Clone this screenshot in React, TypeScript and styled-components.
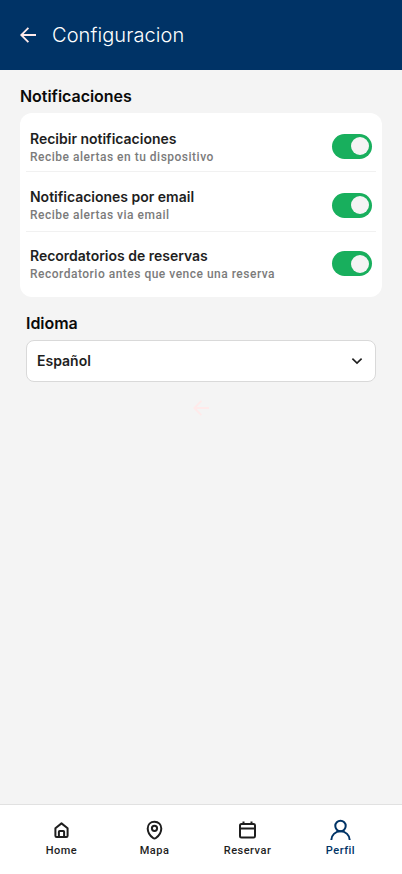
import React, { useState } from "react";
import styled, { createGlobalStyle } from "styled-components";

const GlobalStyle = createGlobalStyle`
  *, *::before, *::after { box-sizing: border-box; }
  body { margin: 0; background: #f4f4f4; font-family: Inter, sans-serif; }
  button { border: 0; padding: 0; background: none; font: inherit; cursor: pointer; }
`;

const Screen = styled.div`
  display: flex;
  flex-direction: column;
  width: 402px;
  height: 874px;
  background: #f4f4f4;
  overflow: hidden;
`;

const Header = styled.header`
  display: flex;
  align-items: center;
  gap: 16px;
  height: 70px;
  padding-left: 20px;
  background: #003366;
  flex: none;
`;

const BackButton = styled.button`
  display: flex;
`;

const Title = styled.h1`
  margin: 0;
  font-size: 20px;
  font-weight: 300;
  line-height: 24px;
  letter-spacing: 0.08px;
  color: #fff;
`;

const Content = styled.main`
  display: flex;
  flex-direction: column;
  flex: 1;
  padding: 16px 20px 0;
`;

const Heading = styled.h2<{ $inset?: boolean }>`
  margin: ${(p) => (p.$inset ? "16px 0 7px 6px" : "0 0 7px")};
  font-size: 16px;
  font-weight: 600;
  line-height: 20px;
  letter-spacing: -0.03px;
  color: #0a0a0a;
`;

const Card = styled.section`
  height: 184px;
  padding: 0 6px;
  border-radius: 12px;
  background: #fff;
`;

const Row = styled.div<{ $height: number; $top: number; $line?: boolean }>`
  display: flex;
  justify-content: space-between;
  align-items: flex-start;
  height: ${(p) => p.$height}px;
  padding: ${(p) => p.$top}px 4px 0;
  border-bottom: ${(p) => (p.$line ? "1px solid #f1f1f1" : "0")};
`;

const RowText = styled.div`
  display: flex;
  flex-direction: column;
`;

const RowTitle = styled.span`
  font-size: 14px;
  font-weight: 600;
  line-height: 18px;
  letter-spacing: -0.01px;
  color: #1e1e1e;
`;

const RowNote = styled.span`
  font-family: Roboto, sans-serif;
  font-size: 12px;
  font-weight: 500;
  line-height: 16px;
  letter-spacing: 0.5px;
  color: #7b7b7b;
  margin-top: 1px;
`;

const Toggle = styled.button<{ $on: boolean; $offset: number }>`
  display: flex;
  align-items: center;
  justify-content: ${(p) => (p.$on ? "flex-end" : "flex-start")};
  width: 40px;
  height: 24.5px;
  margin-top: ${(p) => p.$offset}px;
  padding: 0 3px;
  border-radius: 13px;
  background: ${(p) => (p.$on ? "#18af5d" : "#c4c4c4")};
`;

const Knob = styled.span`
  width: 18px;
  height: 18px;
  border-radius: 50%;
  background: #f4f4f4;
`;

const Select = styled.button`
  display: flex;
  align-items: center;
  justify-content: space-between;
  height: 42px;
  margin: 0 6px;
  padding: 0 12px 0 10px;
  border: 1px solid #d9d9d9;
  border-radius: 8px;
  background: #fff;
  font-size: 14px;
  font-weight: 600;
  color: #1e1e1e;
`;

const SelectValue = styled.span`
  line-height: 18px;
  padding-bottom: 1px;
`;

const FaintArrow = styled.div`
  display: flex;
  justify-content: center;
  margin-top: 18px;
`;

const Nav = styled.nav`
  display: flex;
  height: 70px;
  padding: 0 15px;
  border-top: 1px solid #e1e1e1;
  background: #fff;
  flex: none;
`;

const NavItem = styled.button<{ $active?: boolean }>`
  display: flex;
  flex-direction: column;
  align-items: center;
  gap: 1px;
  flex: 1;
  padding-top: 13px;
  color: ${(p) => (p.$active ? "#003366" : "#1e1e1e")};
`;

const NavLabel = styled.span`
  font-family: Roboto, sans-serif;
  font-size: 11px;
  font-weight: 500;
  line-height: 16px;
  letter-spacing: 0.5px;
`;

const BackArrow = ({ color }: { color: string }) => (
  <svg width="16" height="16" viewBox="0 0 16 16" fill="none" stroke={color} strokeWidth="1.8">
    <path d="M16 8H1.4M8.4 .8 1.2 8l7.2 7.2" />
  </svg>
);

const iconProps = {
  width: 25,
  height: 24,
  viewBox: "-0.5 0 25 24",
  fill: "none",
  stroke: "currentColor",
  strokeWidth: 2,
} as const;

const HomeIcon = () => (
  <svg {...iconProps}>
    <path d="M5.9 10.2 12 5.4l6.1 4.8v7.6q0 1.3-1.3 1.3H7.2q-1.3 0-1.3-1.3Z" strokeLinejoin="round" />
    <path d="M9.4 19v-5.2q0-.8.8-.8h3.6q.8 0 .8.8V19" />
  </svg>
);

const PinIcon = () => (
  <svg {...iconProps}>
    <path d="M12 3.7c-4 0-6.8 2.9-6.8 6.8 0 4.2 3.1 7.8 5.4 9.5q1.4 1 2.8 0c2.3-1.7 5.4-5.3 5.4-9.5 0-3.9-2.8-6.8-6.8-6.8Z" />
    <circle cx="12" cy="10.3" r="2.6" />
  </svg>
);

const CalendarIcon = () => (
  <svg {...iconProps}>
    <rect x="4.5" y="6" width="15" height="13.4" rx="1.5" />
    <path d="M4.5 10.6h15M8 3.6V7M16 3.6V7" />
  </svg>
);

const UserIcon = () => (
  <svg {...iconProps}>
    <circle cx="12" cy="8" r="5.2" />
    <path d="M2.8 22c0-4.8 4-8.7 9.2-8.7s9.2 3.9 9.2 8.7" />
  </svg>
);

const rows = [
  { title: "Recibir notificaciones", note: "Recibe alertas en tu dispositivo", height: 59, top: 17, offset: 4.2 },
  { title: "Notificaciones por email", note: "Recibe alertas via email", height: 60, top: 16, offset: 5 },
  { title: "Recordatorios de reservas", note: "Recordatorio antes que vence una reserva", height: 65, top: 15, offset: 4.4 },
];

const tabs = [
  { label: "Home", Icon: HomeIcon },
  { label: "Mapa", Icon: PinIcon },
  { label: "Reservar", Icon: CalendarIcon },
  { label: "Perfil", Icon: UserIcon },
];

export default function App() {
  const [enabled, setEnabled] = useState([true, true, true]);
  const flip = (index: number) =>
    setEnabled((values) => values.map((value, i) => (i === index ? !value : value)));

  return (
    <>
      <GlobalStyle />
      <Screen>
        <Header>
          <BackButton>
            <BackArrow color="#ffeaea" />
          </BackButton>
          <Title>Configuracion</Title>
        </Header>
        <Content>
          <Heading>Notificaciones</Heading>
          <Card>
            {rows.map((row, i) => (
              <Row key={row.title} $height={row.height} $top={row.top} $line={i < rows.length - 1}>
                <RowText>
                  <RowTitle>{row.title}</RowTitle>
                  <RowNote>{row.note}</RowNote>
                </RowText>
                <Toggle
                  $on={enabled[i]}
                  $offset={row.offset}
                  onClick={() => flip(i)}
                  role="switch"
                  aria-checked={enabled[i]}
                >
                  <Knob />
                </Toggle>
              </Row>
            ))}
          </Card>
          <Heading $inset>Idioma</Heading>
          <Select>
            <SelectValue>Español</SelectValue>
            <svg width="12" height="8" viewBox="0 0 12 8" fill="none" stroke="#1e1e1e" strokeWidth="1.6">
              <path d="M1.4 1.6 6 6.1l4.6-4.5" />
            </svg>
          </Select>
          <FaintArrow>
            <BackArrow color="#ffeaea" />
          </FaintArrow>
        </Content>
        <Nav>
          {tabs.map(({ label, Icon }) => (
            <NavItem key={label} $active={label === "Perfil"}>
              <Icon />
              <NavLabel>{label}</NavLabel>
            </NavItem>
          ))}
        </Nav>
      </Screen>
    </>
  );
}
